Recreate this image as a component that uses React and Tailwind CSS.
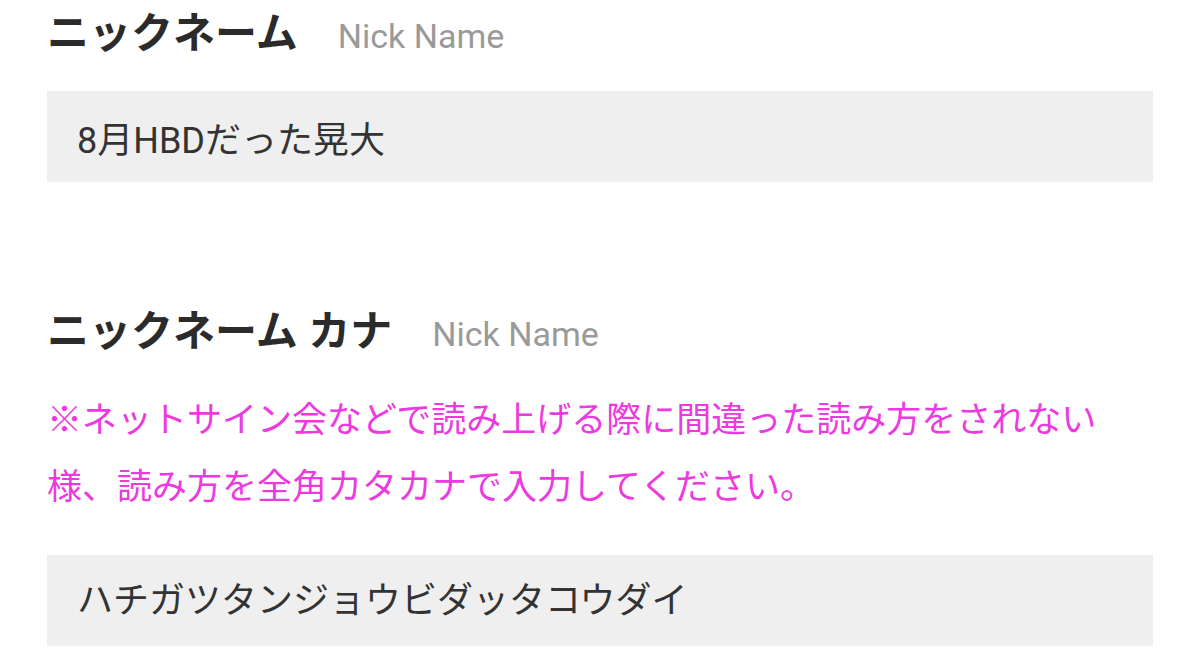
import React from "react";

const jp = "font-['Roboto','Noto_Sans_CJK_JP',sans-serif]";

function Label({ title, sub }) {
  return (
    <div className="flex items-baseline">
      <h2 className={`${jp} text-[42px] leading-[42px] font-bold text-[#2b2b2b]`}>{title}</h2>
      <span className="ml-[40px] font-['Roboto',sans-serif] text-[34px] leading-[40px] text-[#9a9a9a]">{sub}</span>
    </div>
  );
}

function Field({ value, className = "" }) {
  return (
    <div className={`flex h-[91px] items-center bg-[#efefef] pl-[30px] ${className}`}>
      <span className={`${jp} text-[36px] leading-[40px] text-[#333333]`}>{value}</span>
    </div>
  );
}

export default function App() {
  return (
    <div className="min-h-screen w-full bg-white px-[47px] pt-[13px]">
      <Label title="ニックネーム" sub="Nick Name" />
      <Field value="8月HBDだった晃大" className="mt-[35px] pt-[8px]" />

      <div className="mt-[129px]">
        <Label title="ニックネーム カナ" sub="Nick Name" />
      </div>
      <p className={`${jp} mt-[33px] text-[35px] leading-[67px] text-[#ec3ae0]`}>
        ※ネットサイン会などで読み上げる際に間違った読み方をされない様、読み方を全角カタカナで入力してください。
      </p>
      <Field value="ハチガツタンジョウビダッタコウダイ" className="mt-[34px]" />
    </div>
  );
}
